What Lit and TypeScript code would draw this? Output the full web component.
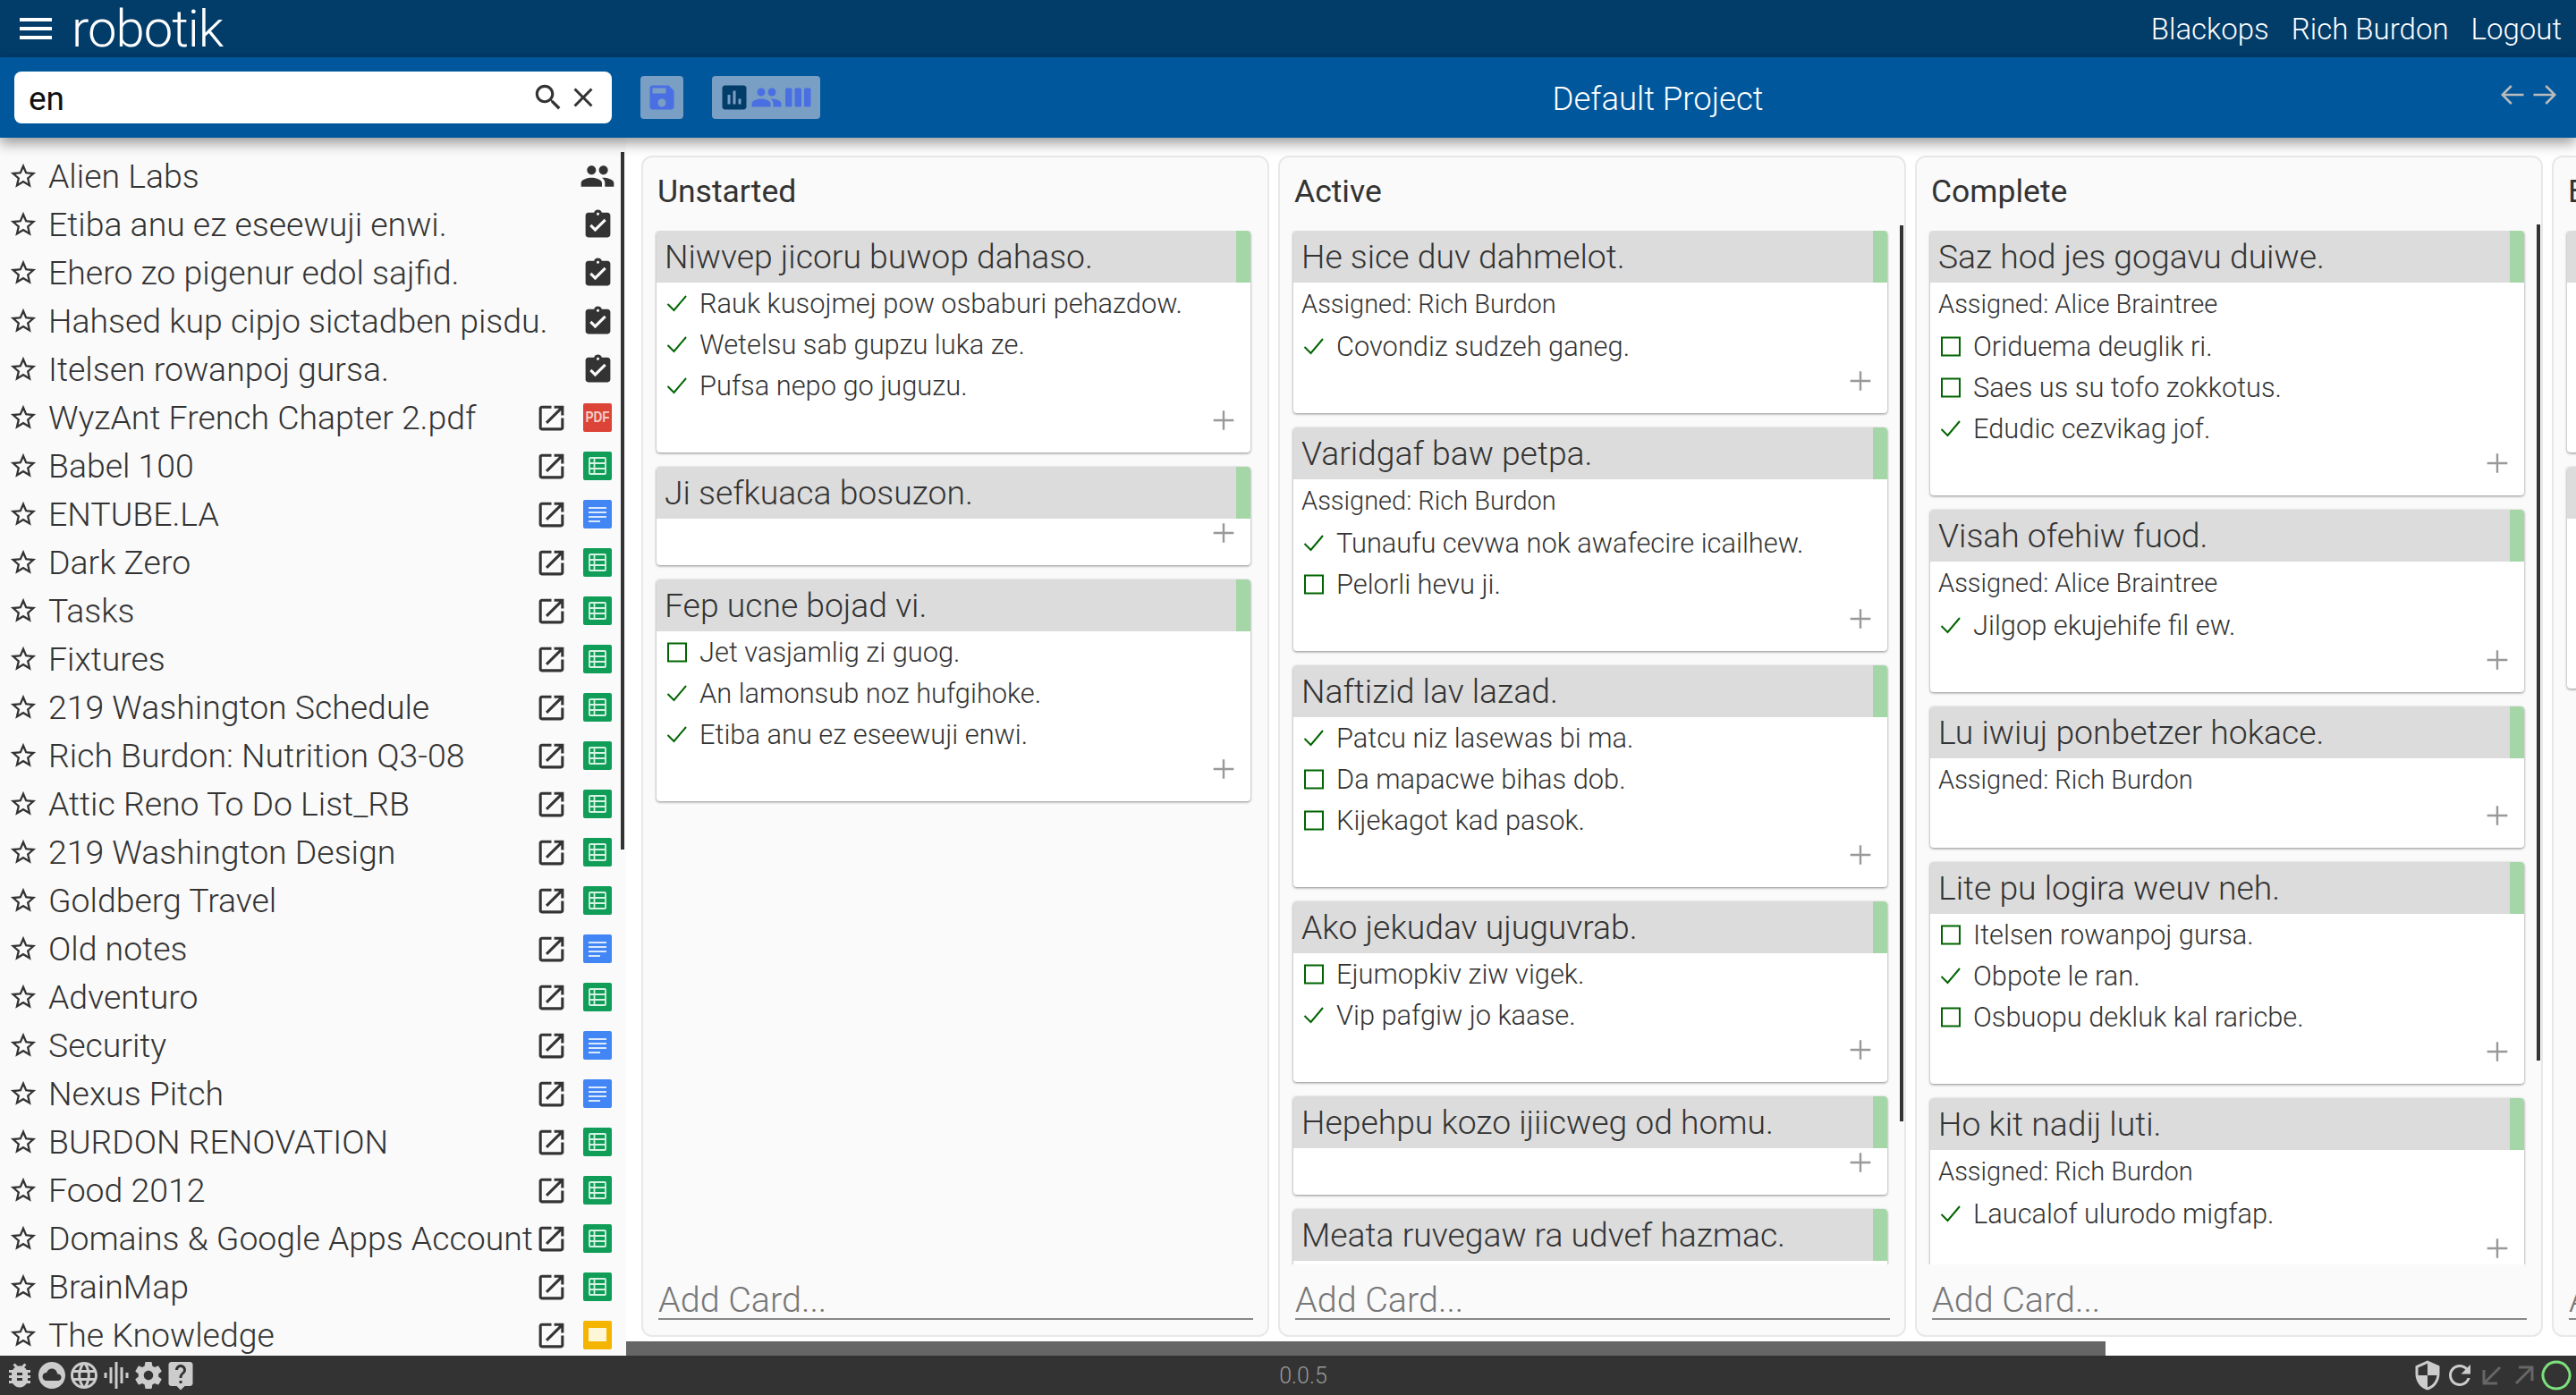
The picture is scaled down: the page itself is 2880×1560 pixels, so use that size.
import { LitElement, html, css, svg } from "lit";
import { customElement } from "lit/decorators.js";

const P: Record<string, string> = {
  menu: "M3 18h18v-2H3v2zm0-5h18v-2H3v2zm0-7v2h18V6H3z",
  search: "M15.5 14h-.79l-.28-.27C15.41 12.59 16 11.11 16 9.5 16 5.91 13.09 3 9.5 3S3 5.91 3 9.5 5.91 16 9.5 16c1.61 0 3.09-.59 4.23-1.57l.27.28v.79l5 4.99L20.49 19l-4.99-5zm-6 0C7.01 14 5 11.99 5 9.5S7.01 5 9.5 5 14 7.01 14 9.5 11.99 14 9.5 14z",
  close: "M19 6.41L17.59 5 12 10.59 6.41 5 5 6.41 10.59 12 5 17.59 6.41 19 12 13.41 17.59 19 19 17.59 13.41 12z",
  save: "M17 3H5c-1.11 0-2 .9-2 2v14c0 1.1.89 2 2 2h14c1.1 0 2-.9 2-2V7l-4-4zm-5 16c-1.66 0-3-1.34-3-3s1.34-3 3-3 3 1.34 3 3-1.34 3-3 3zm3-10H5V5h10v4z",
  chart: "M19 3H5c-1.1 0-2 .9-2 2v14c0 1.1.9 2 2 2h14c1.1 0 2-.9 2-2V5c0-1.1-.9-2-2-2zM9 17H7v-7h2v7zm4 0h-2V7h2v10zm4 0h-2v-4h2v4z",
  people: "M16 11c1.66 0 2.99-1.34 2.99-3S17.66 5 16 5c-1.66 0-3 1.34-3 3s1.34 3 3 3zm-8 0c1.66 0 2.99-1.34 2.99-3S9.66 5 8 5C6.34 5 5 6.34 5 8s1.34 3 3 3zm0 2c-2.33 0-7 1.17-7 3.5V19h14v-2.5c0-2.33-4.67-3.5-7-3.5zm8 0c-.29 0-.62.02-.97.05 1.16.84 1.97 1.97 1.97 3.45V19h6v-2.5c0-2.33-4.67-3.5-7-3.5z",
  week: "M6 5H3c-.55 0-1 .45-1 1v12c0 .55.45 1 1 1h3c.55 0 1-.45 1-1V6c0-.55-.45-1-1-1zm14 0h-3c-.55 0-1 .45-1 1v12c0 .55.45 1 1 1h3c.55 0 1-.45 1-1V6c0-.55-.45-1-1-1zm-7 0h-3c-.55 0-1 .45-1 1v12c0 .55.45 1 1 1h3c.55 0 1-.45 1-1V6c0-.55-.45-1-1-1z",
  star: "M22 9.24l-7.19-.62L12 2 9.19 8.63 2 9.24l5.46 4.73L5.82 21 12 17.27 18.18 21l-1.63-7.03L22 9.24zM12 15.4l-3.76 2.27 1-4.28-3.32-2.88 4.38-.38L12 6.1l1.71 4.04 4.38.38-3.32 2.88 1 4.28L12 15.4z",
  task: "M19 3h-4.18C14.4 1.84 13.3 1 12 1c-1.3 0-2.4.84-2.82 2H5c-1.1 0-2 .9-2 2v14c0 1.1.9 2 2 2h14c1.1 0 2-.9 2-2V5c0-1.1-.9-2-2-2zm-7 0c.55 0 1 .45 1 1s-.45 1-1 1-1-.45-1-1 .45-1 1-1zm-2 14l-4-4 1.41-1.41L10 14.17l6.59-6.59L18 9l-8 8z",
  open: "M19 19H5V5h7V3H5c-1.11 0-2 .9-2 2v14c0 1.1.89 2 2 2h14c1.1 0 2-.9 2-2v-7h-2v7zM14 3v2h3.59l-9.83 9.83 1.41 1.41L19 6.41V10h2V3h-7z",
  bug: "M20 8h-2.81c-.45-.78-1.07-1.45-1.82-1.96L17 4.41 15.59 3l-2.17 2.17C12.96 5.06 12.49 5 12 5c-.49 0-.96.06-1.41.17L8.41 3 7 4.41l1.62 1.63C7.88 6.55 7.26 7.22 6.81 8H4v2h2.09c-.05.33-.09.66-.09 1v1H4v2h2v1c0 .34.04.67.09 1H4v2h2.81c1.04 1.79 2.97 3 5.19 3s4.15-1.21 5.19-3H20v-2h-2.09c.05-.33.09-.66.09-1v-1h2v-2h-2v-1c0-.34-.04-.67-.09-1H20V8zm-6 8h-4v-2h4v2zm0-4h-4v-2h4v2z",
  cloud: "M12 2C6.47 2 2 6.47 2 12s4.47 10 10 10 10-4.47 10-10S17.53 2 12 2zm4.5 14H8c-1.66 0-3-1.34-3-3s1.34-3 3-3l.14.01C8.58 8.28 10.13 7 12 7c2.21 0 4 1.79 4 4h.5c1.38 0 2.5 1.12 2.5 2.5S17.88 16 16.5 16z",
  globe: "M11.99 2C6.47 2 2 6.48 2 12s4.47 10 9.99 10C17.52 22 22 17.52 22 12S17.52 2 11.99 2zm6.93 6h-2.95c-.32-1.25-.78-2.45-1.38-3.56 1.84.63 3.37 1.91 4.33 3.56zM12 4.04c.83 1.2 1.48 2.53 1.91 3.96h-3.82c.43-1.43 1.08-2.76 1.91-3.96zM4.26 14C4.1 13.36 4 12.69 4 12s.1-1.36.26-2h3.38c-.08.66-.14 1.32-.14 2 0 .68.06 1.34.14 2H4.26zm.82 2h2.95c.32 1.25.78 2.45 1.38 3.56-1.84-.63-3.37-1.9-4.33-3.56zm2.95-8H5.08c.96-1.66 2.49-2.93 4.33-3.56C8.81 5.55 8.35 6.75 8.03 8zM12 19.96c-.83-1.2-1.48-2.53-1.91-3.96h3.82c-.43 1.43-1.08 2.76-1.91 3.96zM14.34 14H9.66c-.09-.66-.16-1.32-.16-2 0-.68.07-1.35.16-2h4.68c.09.65.16 1.32.16 2 0 .68-.07 1.34-.16 2zm.25 5.56c.6-1.11 1.06-2.31 1.38-3.56h2.95c-.96 1.65-2.49 2.93-4.33 3.56zM16.36 14c.08-.66.14-1.32.14-2 0-.68-.06-1.34-.14-2h3.38c.16.64.26 1.31.26 2s-.1 1.36-.26 2h-3.38z",
  eq: "M7 18h2V6H7v12zm4 4h2V2h-2v20zm-8-8h2v-4H3v4zm12 4h2V6h-2v12zm4-8v4h2v-4h-2z",
  gear: "M19.43 12.98c.04-.32.07-.64.07-.98s-.03-.66-.07-.98l2.11-1.65c.19-.15.24-.42.12-.64l-2-3.46c-.12-.22-.39-.3-.61-.22l-2.49 1c-.52-.4-1.08-.73-1.69-.98l-.38-2.65C14.46 2.18 14.25 2 14 2h-4c-.25 0-.46.18-.49.42l-.38 2.65c-.61.25-1.17.59-1.69.98l-2.49-1c-.23-.09-.49 0-.61.22l-2 3.46c-.13.22-.07.49.12.64l2.11 1.65c-.04.32-.07.65-.07.98s.03.66.07.98l-2.11 1.65c-.19.15-.24.42-.12.64l2 3.46c.12.22.39.3.61.22l2.49-1c.52.4 1.08.73 1.69.98l.38 2.65c.03.24.24.42.49.42h4c.25 0 .46-.18.49-.42l.38-2.65c.61-.25 1.17-.59 1.69-.98l2.49 1c.23.09.49 0 .61-.22l2-3.46c.12-.22.07-.49-.12-.64l-2.11-1.65zM12 15.5c-1.93 0-3.5-1.57-3.5-3.5s1.57-3.5 3.5-3.5 3.5 1.57 3.5 3.5-1.57 3.5-3.5 3.5z",
  help: "M19 2H5c-1.11 0-2 .9-2 2v14c0 1.1.89 2 2 2h4l3 3 3-3h4c1.1 0 2-.9 2-2V4c0-1.1-.9-2-2-2zm-6 16h-2v-2h2v2zm2.07-7.75l-.9.92C13.45 11.9 13 12.5 13 14h-2v-.5c0-1.1.45-2.1 1.17-2.83l1.24-1.26c.37-.36.59-.86.59-1.41 0-1.1-.9-2-2-2s-2 .9-2 2H8c0-2.21 1.79-4 4-4s4 1.79 4 4c0 .88-.36 1.68-.93 2.25z",
  shield: "M12 1L3 5v6c0 5.55 3.84 10.74 9 12 5.16-1.26 9-6.45 9-12V5l-9-4zm0 10.99h7c-.53 4.12-3.28 7.79-7 8.94V12H5V6.3l7-3.11v8.8z",
  refresh: "M17.65 6.35C16.2 4.9 14.21 4 12 4c-4.42 0-7.99 3.58-7.99 8s3.57 8 7.99 8c3.73 0 6.84-2.55 7.73-6h-2.08c-.82 2.33-3.04 4-5.65 4-3.31 0-6-2.69-6-6s2.69-6 6-6c1.66 0 3.14.69 4.22 1.78L13 11h7V4l-2.35 2.35z",
};

const icon = (name: string, cls: string) =>
  html`<svg class="ic ${cls}" viewBox="0 0 24 24"><path d=${P[name]}></path></svg>`;
const line = (d: string, cls: string) =>
  html`<svg class="ln ${cls}" viewBox="0 0 24 24">${svg`<path d=${d}></path>`}</svg>`;

const docs: [string, string][] = [
  ["Alien Labs", "team"],
  ["Etiba anu ez eseewuji enwi.", "task"],
  ["Ehero zo pigenur edol sajfid.", "task"],
  ["Hahsed kup cipjo sictadben pisdu.", "task"],
  ["Itelsen rowanpoj gursa.", "task"],
  ["WyzAnt French Chapter 2.pdf", "pdf"],
  ["Babel 100", "sheet"],
  ["ENTUBE.LA", "doc"],
  ["Dark Zero", "sheet"],
  ["Tasks", "sheet"],
  ["Fixtures", "sheet"],
  ["219 Washington Schedule", "sheet"],
  ["Rich Burdon: Nutrition Q3-08", "sheet"],
  ["Attic Reno To Do List_RB", "sheet"],
  ["219 Washington Design", "sheet"],
  ["Goldberg Travel", "sheet"],
  ["Old notes", "doc"],
  ["Adventuro", "sheet"],
  ["Security", "doc"],
  ["Nexus Pitch", "doc"],
  ["BURDON RENOVATION", "sheet"],
  ["Food 2012", "sheet"],
  ["Domains & Google Apps Account", "sheet"],
  ["BrainMap", "sheet"],
  ["The Knowledge", "slide"],
];

type Card = { t: string; a?: string; i: [number, string][] };
type Col = { name: string; thumb?: [number, number]; cards: Card[] };

const RB = "Rich Burdon";
const AB = "Alice Braintree";
const cols: Col[] = [
  {
    name: "Unstarted",
    cards: [
      { t: "Niwvep jicoru buwop dahaso.", i: [[1, "Rauk kusojmej pow osbaburi pehazdow."], [1, "Wetelsu sab gupzu luka ze."], [1, "Pufsa nepo go juguzu."]] },
      { t: "Ji sefkuaca bosuzon.", i: [] },
      { t: "Fep ucne bojad vi.", i: [[0, "Jet vasjamlig zi guog."], [1, "An lamonsub noz hufgihoke."], [1, "Etiba anu ez eseewuji enwi."]] },
    ],
  },
  {
    name: "Active",
    thumb: [76, 1002],
    cards: [
      { t: "He sice duv dahmelot.", a: RB, i: [[1, "Covondiz sudzeh ganeg."]] },
      { t: "Varidgaf baw petpa.", a: RB, i: [[1, "Tunaufu cevwa nok awafecire icailhew."], [0, "Pelorli hevu ji."]] },
      { t: "Naftizid lav lazad.", i: [[1, "Patcu niz lasewas bi ma."], [0, "Da mapacwe bihas dob."], [0, "Kijekagot kad pasok."]] },
      { t: "Ako jekudav ujuguvrab.", i: [[0, "Ejumopkiv ziw vigek."], [1, "Vip pafgiw jo kaase."]] },
      { t: "Hepehpu kozo ijiicweg od homu.", i: [] },
      { t: "Meata ruvegaw ra udvef hazmac.", i: [] },
    ],
  },
  {
    name: "Complete",
    thumb: [75, 935],
    cards: [
      { t: "Saz hod jes gogavu duiwe.", a: AB, i: [[0, "Oriduema deuglik ri."], [0, "Saes us su tofo zokkotus."], [1, "Edudic cezvikag jof."]] },
      { t: "Visah ofehiw fuod.", a: AB, i: [[1, "Jilgop ekujehife fil ew."]] },
      { t: "Lu iwiuj ponbetzer hokace.", a: RB, i: [] },
      { t: "Lite pu logira weuv neh.", i: [[0, "Itelsen rowanpoj gursa."], [1, "Obpote le ran."], [0, "Osbuopu dekluk kal raricbe."]] },
      { t: "Ho kit nadij luti.", a: RB, i: [[1, "Laucalof ulurodo migfap."]] },
    ],
  },
  {
    name: "Backlog",
    cards: [
      { t: "Fubdo wog", i: [[1, "Ziguho"], [0, "Uvpeba"], [1, "Kosaf"]] },
      { t: "Cejma", i: [[1, "Uwihu"], [1, "Gedom"], [0, "Lakuj"]] },
    ],
  },
];

@customElement("app-root")
export class AppRoot extends LitElement {
  static styles = css`
    :host {
      display: flex;
      flex-direction: column;
      height: 1560px;
      width: 2880px;
      overflow: hidden;
      background: #fff;
      font-family: Roboto, "Liberation Sans", sans-serif;
      font-weight: 300;
      color: #333;
    }
    svg { display: block; flex: none; }
    .ic { fill: currentColor; }
    .ln { fill: none; stroke: currentColor; }

    .top {
      flex: none; height: 64px; background: #023c69; color: #fff;
      display: flex; align-items: center; padding: 0 16px; gap: 0;
    }
    .menu { width: 48px; height: 48px; }
    .logo { font-size: 58px; line-height: 64px; margin-left: 16px; font-weight: 300; flex: 1; letter-spacing: -1px; }
    .links { display: flex; gap: 25px; font-size: 33px; font-weight: 300; }

    .tools {
      flex: none; height: 90px; background: #01579b; display: flex; align-items: center;
      position: relative; z-index: 2; box-shadow: 0 6px 14px rgba(0,0,0,.4);
      padding: 0 20px 0 16px; color: #fff;
    }
    .search {
      flex: none; box-sizing: border-box; width: 668px; height: 58px; background: #fff; border-radius: 8px;
      display: flex; align-items: center; padding: 0 14px 0 16px; color: #333;
    }
    .q { flex: 1; font-size: 37px; font-weight: 400; color: #111; padding-top: 2px; }
    .i-s { width: 38px; height: 38px; }
    .i-x { width: 36px; height: 36px; margin-left: 2px; }
    .btn {
      flex: none; height: 48px; background: #7a9fc5; border-radius: 4px; display: flex; align-items: center;
      padding: 0 6px; margin-left: 32px; color: #4a6fe3;
    }
    .btn svg { width: 36px; height: 36px; }
    .btn .on { color: #023c69; margin-left: 1px; }
    .title { flex: 1; text-align: center; font-size: 36.5px; font-weight: 300; padding: 2px 4px 0 0; }
    .arrows { display: flex; gap: 6px; color: #bbb; margin-bottom: 6px; }
    .arrows svg { width: 30px; height: 30px; stroke-width: 2; }

    .main { flex: 1; min-height: 0; display: flex; }
    .side {
      flex: none; width: 700px; box-sizing: border-box; background: #fafafa; padding-top: 16px;
      position: relative; overflow: hidden;
    }
    .thumb { position: absolute; background: #333; width: 4px; z-index: 1; }
    .side .thumb { left: 694px; top: 16px; height: 780px; }
    .row { height: 54px; display: flex; align-items: center; padding-left: 9px; font-size: 37.4px; color: #333; }
    .row .st { width: 34px; height: 34px; margin-right: 11px; }
    .name { flex: 1; min-width: 0; white-space: nowrap; overflow: hidden; }
    .row .op { width: 37px; height: 37px; margin: 0 17px 0 0; }
    .tp { width: 32px; height: 32px; flex: none; margin-right: 16px; border-radius: 2px; display: flex; align-items: center; justify-content: center; }
    .sheet { background: #0f9d58; }
    .doc { background: #4285f4; }
    .slide { background: #f4b400; }
    .pdf { background: #db4437; color: #f6cdc6; font: 700 17px "Liberation Sans", sans-serif; }
    .pl { display: inline-block; transform: scaleX(.8); }
    .tp svg { width: 32px; height: 32px; }
    .gi { fill: none; stroke: #d8f2e4; stroke-width: 1.8; }
    .di { fill: none; stroke: #dce9fd; stroke-width: 2; }
    .si { fill: #fff6d8; }
    .team { width: 40px; height: 40px; margin-right: 12px; }
    .clip { width: 37px; height: 37px; margin-right: 13px; }

    .board { flex: 1; min-width: 0; position: relative; overflow: hidden; display: flex; gap: 10px; padding: 20px 0 21px 17px; }
    .hbar { position: absolute; left: 0; bottom: 0; width: 1654px; height: 16px; background: #666; }
    .col {
      flex: none; width: 702px; box-sizing: border-box; background: #fafafa; border: 2px solid #e8e8e8; border-radius: 12px;
      display: flex; flex-direction: column; position: relative; overflow: hidden;
    }
    .col .thumb { right: 1px; }
    .colh { flex: none; height: 82px; box-sizing: border-box; padding: 16px 0 0 16px; font-size: 35.5px; font-weight: 400; line-height: 44px; }
    .cards { flex: 1; min-height: 0; overflow: hidden; padding: 0 19px 0 15px; display: flex; flex-direction: column; gap: 16px; }
    .card { flex: none; background: #fff; border-radius: 4px; box-shadow: 0 1px 3px rgba(0,0,0,.45); }
    .ch {
      height: 58px; display: flex; align-items: center; background: #dcdcdc; font-size: 37.3px;
      border-radius: 4px 4px 0 0; border-right: 16px solid #a5d6a7; padding: 0 0 0 9px; box-sizing: border-box; white-space: nowrap; overflow: hidden;
    }
    .as { height: 48px; line-height: 48px; padding-left: 9px; font-size: 29px; font-weight: 300; }
    .it { height: 46px; display: flex; align-items: center; font-size: 30.8px; padding-left: 11px; white-space: nowrap; }
    .it svg { width: 24px; height: 24px; margin-right: 13px; color: #006400; stroke-width: 2; }
    .cf { height: 52px; display: flex; justify-content: flex-end; padding: 0 14px 0 0; color: #999; }
    .cf svg { width: 32px; height: 32px; stroke-width: 1.8; }
    .add {
      flex: none; height: 79px; box-sizing: border-box; margin: 0 16px 0 17px; padding-top: 18px;
      font-size: 39.5px; color: #777; position: relative; line-height: 44px; white-space: nowrap;
    }
    .add::after { content: ""; position: absolute; left: 0; right: 0; top: 60px; height: 2px; background: #888; }

    .foot {
      flex: none; height: 44px; background: #333; color: #ccc; display: flex; align-items: center;
      padding: 0 4px; position: relative;
    }
    .fl { display: flex; align-items: center; flex: 1; }
    .foot svg { width: 36px; height: 36px; }
    .ver { color: #999; font-size: 25px; font-weight: 300; flex: none; width: 200px; text-align: center; padding-left: 34px; box-sizing: content-box; margin-left: -17px; margin-right: -17px; }
    .fr { display: flex; align-items: center; flex: 1; justify-content: flex-end; }
    .fr .ar { color: #666; stroke-width: 2; }
    .fr .dot { color: #7be07b; stroke-width: 2; }
  `;

  private typeIcon(k: string) {
    if (k === "team") return icon("people", "team");
    if (k === "task") return icon("task", "clip");
    if (k === "pdf") return html`<span class="tp pdf"><span class="pl">PDF</span></span>`;
    if (k === "sheet")
      return html`<span class="tp sheet"><svg viewBox="0 0 32 32"><rect class="gi" x="7" y="7" width="18" height="18" rx="1"></rect><path class="gi" d="M7 13h18M7 19h18M12.5 7v18"></path></svg></span>`;
    if (k === "doc")
      return html`<span class="tp doc"><svg viewBox="0 0 32 32"><path class="di" d="M6 9h20M6 14h20M6 19h20M6 24h13"></path></svg></span>`;
    return html`<span class="tp slide"><svg viewBox="0 0 32 32"><rect class="si" x="6" y="8" width="20" height="15"></rect></svg></span>`;
  }

  private card(c: Card) {
    return html`<div class="card">
      <div class="ch">${c.t}</div>
      ${c.a ? html`<div class="as">Assigned: ${c.a}</div>` : ""}
      ${c.i.map(
        ([d, t]) => html`<div class="it">
          ${d
            ? line("M1.5 13 L8.5 20 L22 4", "")
            : line("M2 2.5h20v20h-20z", "")}${t}
        </div>`
      )}
      <div class="cf">${line("M12 4v16M3.5 12h17", "")}</div>
    </div>`;
  }

  render() {
    return html`
      <div class="top">
        ${icon("menu", "menu")}
        <div class="logo">robotik</div>
        <div class="links"><span>Blackops</span><span>Rich Burdon</span><span>Logout</span></div>
      </div>
      <div class="tools">
        <div class="search">
          <div class="q">en</div>
          ${icon("search", "i-s")}${icon("close", "i-x")}
        </div>
        <div class="btn">${icon("save", "")}</div>
        <div class="btn">${icon("chart", "on")}${icon("people", "")}${icon("week", "")}</div>
        <div class="title">Default Project</div>
        <div class="arrows">
          ${line("M22 12H3M11 4l-8 8 8 8", "")}${line("M2 12h19M13 4l8 8-8 8", "")}
        </div>
      </div>
      <div class="main">
        <div class="side">
          <div class="thumb"></div>
          ${docs.map(
            ([n, k]) => html`<div class="row">
              ${icon("star", "st")}
              <div class="name">${n}</div>
              ${k !== "team" && k !== "task" ? icon("open", "op") : ""}
              ${this.typeIcon(k)}
            </div>`
          )}
        </div>
        <div class="board">
          ${cols.map(
            (c) => html`<div class="col">
              ${c.thumb
                ? html`<div class="thumb" style="top:${c.thumb[0]}px;height:${c.thumb[1]}px"></div>`
                : ""}
              <div class="colh">${c.name}</div>
              <div class="cards">${c.cards.map((x) => this.card(x))}</div>
              <div class="add">Add Card...</div>
            </div>`
          )}
          <div class="hbar"></div>
        </div>
      </div>
      <div class="foot">
        <div class="fl">
          ${["bug", "cloud", "globe", "eq", "gear", "help"].map((n) => icon(n, ""))}
        </div>
        <div class="ver">0.0.5</div>
        <div class="fr">
          ${icon("shield", "")}${icon("refresh", "")}
          ${line("M18 6L6.5 17.5M6 8v10h10", "ar")}${line("M6 18L17.5 6.5M8 6h10v10", "ar")}
          ${line("M12 2a10 10 0 1 0 .01 0z", "dot")}
        </div>
      </div>
    `;
  }
}
